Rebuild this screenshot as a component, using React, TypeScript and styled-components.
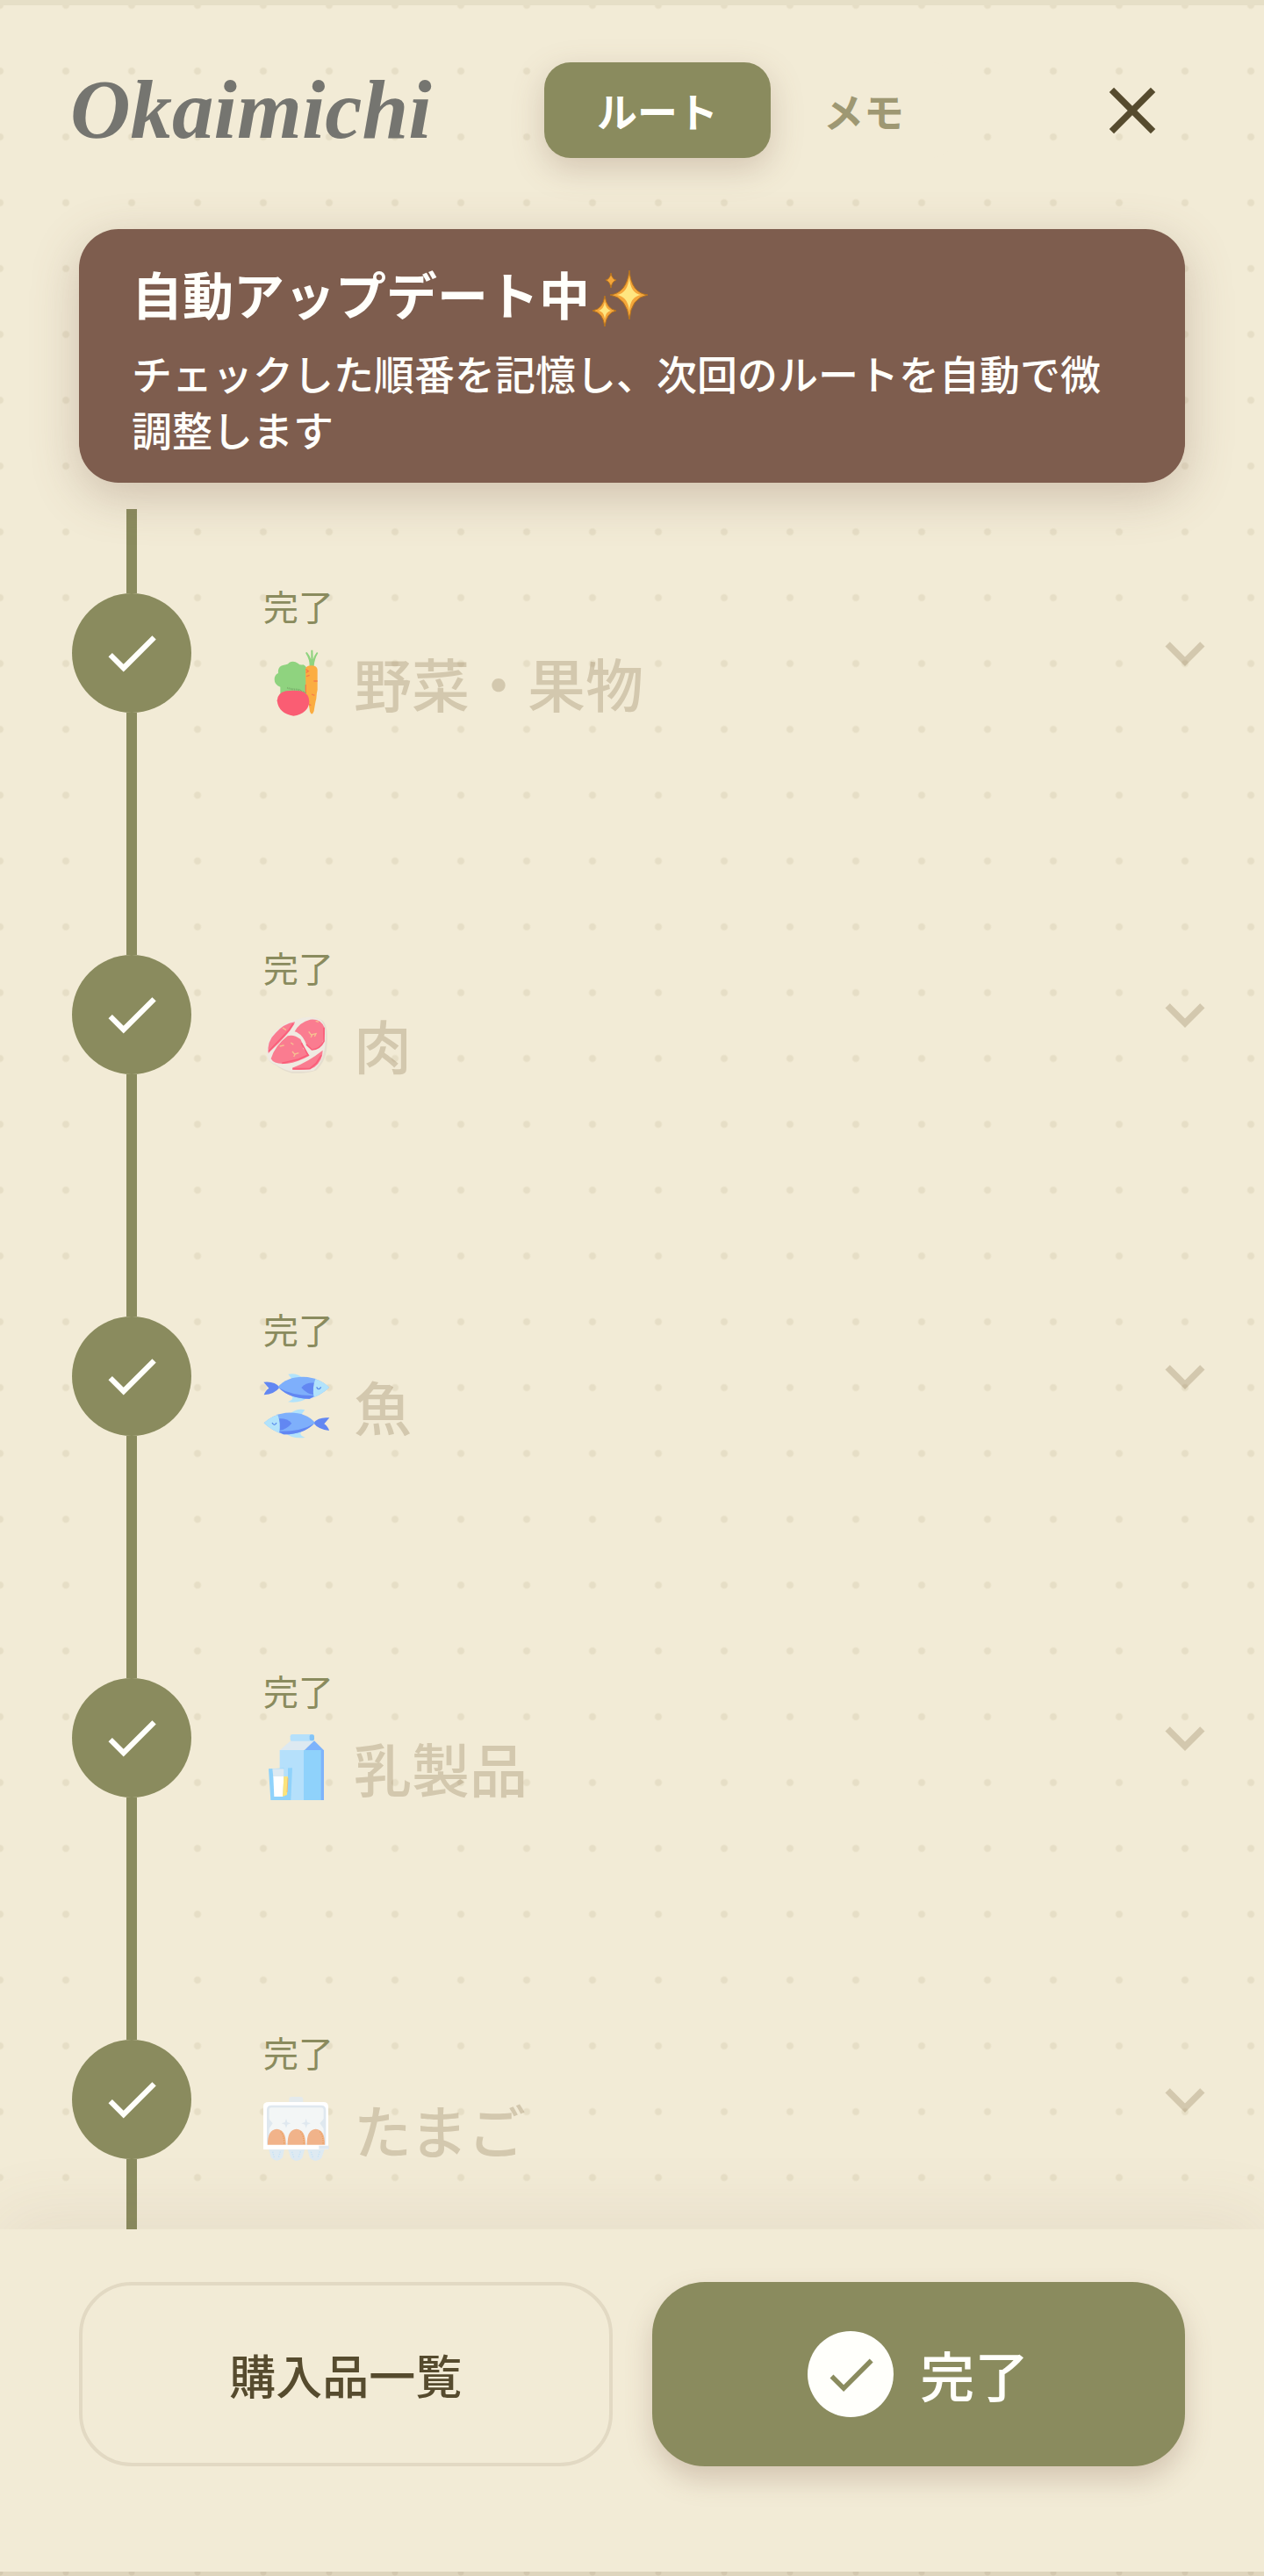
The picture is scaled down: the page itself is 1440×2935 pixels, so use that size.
import React, { useState } from "react";
import styled, { createGlobalStyle, css } from "styled-components";

const color = {
  paper: "#f2ebd6",
  dot: "#e6dec6",
  edge: "#e6dfc7",
  olive: "#8a8b5e",
  cocoa: "#7e5d4e",
  ink: "#564b2e",
  muted: "#9e9873",
  faded: "rgba(92, 62, 16, 0.2)",
  line: "#e2d9c3",
  white: "#fffffb",
};

const GlobalStyle = createGlobalStyle`
  * { box-sizing: border-box; }
  body {
    margin: 0;
    background-color: ${color.paper};
    font-family: "Noto Sans CJK JP", "Noto Sans", sans-serif;
    color: ${color.ink};
  }
  button {
    margin: 0;
    padding: 0;
    border: 0;
    background: none;
    font: inherit;
    color: inherit;
    cursor: pointer;
  }
`;

const Shell = styled.div`
  display: flex;
  flex-direction: column;
  height: 100vh;
  border-top: 6px solid ${color.edge};
  background-color: ${color.paper};
  background-image: radial-gradient(circle at 38px 38px, ${color.dot} 3px, transparent 5px);
  background-size: 75px 75px;
  background-position: -38px -38px;
`;

const Top = styled.div`
  position: relative;
  z-index: 1;
`;

const Header = styled.header`
  display: flex;
  align-items: center;
  padding: 65px 105px 81px 80px;
`;

const Logo = styled.h1`
  flex: 0 0 540px;
  margin: 0;
  font-family: "Liberation Serif", serif;
  font-style: italic;
  font-weight: 700;
  font-size: 95px;
  line-height: 109px;
  color: #757570;
`;

const Tabs = styled.nav`
  display: flex;
  border-radius: 30px;
  background: ${color.paper};
`;

const Tab = styled.button<{ $active: boolean }>`
  padding: 0 60px;
  border-radius: 30px;
  font-size: 46px;
  font-weight: 700;
  line-height: 109px;
  color: ${color.muted};
  ${({ $active }) =>
    $active &&
    css`
      background: ${color.olive};
      color: ${color.white};
      box-shadow: 0 12px 36px rgba(126, 93, 78, 0.26);
    `}
`;

const IconButton = styled.button`
  display: flex;
  margin-left: auto;
`;

const Banner = styled.section`
  margin: 0 90px 30px;
  padding: 27px 60px 30px;
  border-radius: 45px;
  background: ${color.cocoa};
  color: ${color.white};
  box-shadow: 0 15px 54px rgba(126, 93, 78, 0.3);
`;

const BannerTitle = styled.h2`
  display: flex;
  align-items: center;
  gap: 2px;
  margin: 0 0 12px;
  font-size: 58px;
  font-weight: 700;
  line-height: 92px;

  svg {
    margin-top: 12px;
  }
`;

const BannerText = styled.p`
  margin: 0;
  font-size: 46px;
  font-weight: 500;
  line-height: 64px;
`;

const Route = styled.ol`
  flex: 1;
  min-height: 0;
  margin: 0;
  padding: 0 45px 0 82px;
  overflow-y: auto;
  scrollbar-width: none;
  list-style: none;
`;

const Stop = styled.li`
  display: flex;
  gap: 82px;
  height: 412px;
`;

const Rail = styled.div`
  display: flex;
  flex-direction: column;
  align-items: center;
`;

const Track = styled.span<{ $fill?: boolean }>`
  width: 12px;
  height: 96px;
  background: ${color.olive};
  ${({ $fill }) => $fill && "flex: 1;"}
`;

const Marker = styled.button`
  display: flex;
  align-items: center;
  justify-content: center;
  width: 136px;
  height: 136px;
  border-radius: 50%;
  background: ${color.olive};
  color: ${color.white};
`;

const StopRow = styled.button`
  display: flex;
  flex: 1;
  align-items: center;
  align-self: flex-start;
  justify-content: space-between;
  padding-top: 88px;
  text-align: left;
`;

const StopInfo = styled.span`
  display: flex;
  flex-direction: column;
  gap: 23px;
`;

const Status = styled.span`
  font-size: 40px;
  line-height: 44px;
  color: ${color.olive};
`;

const StopName = styled.span`
  display: flex;
  align-items: center;
  gap: 28px;
  font-size: 66px;
  font-weight: 500;
  line-height: 84px;
  color: ${color.faded};
`;

const Chevron = styled.span`
  display: flex;
  color: ${color.faded};
`;

const Footer = styled.footer`
  position: relative;
  display: grid;
  grid-template-columns: 1fr 1fr;
  gap: 45px;
  padding: 60px 90px 120px;
  background: ${color.paper};
  box-shadow: 0 -15px 75px rgba(126, 93, 78, 0.09);
`;

const Action = styled.button<{ $primary?: boolean }>`
  display: flex;
  align-items: center;
  justify-content: center;
  gap: 30px;
  height: 210px;
  border: 4px solid ${color.line};
  border-radius: 60px;
  font-size: 53px;
  font-weight: 500;
  ${({ $primary }) =>
    $primary &&
    css`
      border: 0;
      background: ${color.olive};
      color: ${color.white};
      font-size: 62px;
      box-shadow: 0 15px 30px rgba(126, 93, 78, 0.26);
    `}
`;

const Badge = styled.span`
  display: flex;
  align-items: center;
  justify-content: center;
  width: 98px;
  height: 98px;
  border-radius: 50%;
  background: ${color.white};
  color: ${color.olive};
`;

const BottomEdge = styled.div`
  height: 5px;
  background-color: #e2d9c1;
  background-image: radial-gradient(circle at 38px 38px, #d6ccb3 3px, transparent 4px);
  background-size: 75px 75px;
  background-position: -38px -37px;
`;

const CheckIcon = ({ size }: { size: number }) => (
  <svg width={size} height={size} viewBox="0 0 24 24" fill="currentColor" aria-hidden="true">
    <path d="M9 16.17 4.83 12l-1.42 1.41L9 19 21 7l-1.41-1.41z" />
  </svg>
);

const CloseIcon = () => (
  <svg width="90" height="90" viewBox="0 0 24 24" fill="currentColor" aria-hidden="true">
    <path d="M19 6.41 17.59 5 12 10.59 6.41 5 5 6.41 10.59 12 5 17.59 6.41 19 12 13.41 17.59 19 19 17.59 13.41 12z" />
  </svg>
);

const ChevronIcon = () => (
  <svg width="90" height="90" viewBox="0 0 24 24" fill="currentColor" aria-hidden="true">
    <path d="M16.59 8.59 12 13.17 7.41 8.59 6 10l6 6 6-6z" />
  </svg>
);

const SparklesIcon = () => (
  <svg width="66" height="66" viewBox="0 0 66 66" role="img" aria-label="キラキラ">
    <g fill="#f4a63a" stroke="#b9741c" strokeWidth="1">
      <path d="M43 1Q45 27 64 29Q45 32 43 57Q40 32 21 29Q40 27 43 1Z" />
      <path d="M15 30Q17 45 28 47Q17 49 15 65Q13 49 1 47Q13 45 15 30Z" />
      <path d="M22 4Q23 11 28 12Q23 14 22 21Q21 14 16 12Q21 11 22 4Z" />
    </g>
    <g fill="#ffe680">
      <path d="M43 9Q44 27 56 29Q44 31 43 47Q41 31 29 29Q41 27 43 9Z" />
      <path d="M15 37Q16 45 22 47Q16 48 15 56Q14 48 8 47Q14 45 15 37Z" />
    </g>
  </svg>
);

const VegetableIcon = () => (
  <svg width="75" height="75" viewBox="60 27 225 225" overflow="visible" aria-hidden="true">
    <path d="M118 182V155Q98 148 98 130Q98 113 111 108Q108 84 130 80Q145 78 148 72Q163 63 178 74Q186 82 196 79Q210 84 208 100V180Z" fill="#8fd37f" />
    <path d="M218 84Q219 62 204 38L209 36Q219 48 223 61L223 29H229L230 61Q234 47 243 36L247 39Q234 61 233 84Z" fill="#8fd37f" />
    <path d="M204 94Q206 82 224 82Q244 82 245 96V165Q242 175 241 195Q237 210 233 238Q226 256 219 239Q216 216 212 205Q206 190 205 160Z" fill="#fbad42" />
    <path d="M205 95L214 101L206 106M207 119L218 115M205 147V174M232 135H245M225 180L235 184M216 214L223 218" fill="none" stroke="#f77c4a" strokeWidth="4" />
    <path d="M142 158Q155 164 181 164L205 177" fill="none" stroke="#6f9e60" strokeWidth="6" strokeDasharray="2 3" />
    <path d="M107 202Q108 176 137 169Q162 165 188 169Q217 177 217 206Q213 246 163 254Q112 246 107 202Z" fill="#fa5d73" />
  </svg>
);

const MeatIcon = () => (
  <svg width="75" height="75" viewBox="60 34 225 225" overflow="visible" aria-hidden="true">
    <path d="M75 190Q70 145 98 110Q132 74 175 66Q220 45 260 65Q282 82 278 142Q278 203 240 237Q210 248 158 246Q120 236 104 219Q80 214 75 190Z" fill="#e5decf" />
    <path d="M73 188Q66 144 95 108Q129 71 174 63Q216 46 255 63Q276 80 272 140Q269 204 232 237Q203 242 155 240Q118 229 102 216Q78 211 73 188Z" fill="#efeae1" />
    <path d="M77 179Q72 137 101 110Q129 77 168 71L165 80Q142 119 83 172Z" fill="#fa7c90" />
    <path d="M167 104Q184 72 220 63Q257 59 269 91Q274 134 249 160Q225 171 208 151Q198 119 174 106Z" fill="#fa7c90" />
    <path d="M86 197Q99 153 143 119Q163 112 187 130Q196 145 196 162L218 186Q176 209 143 213Q97 218 86 197Z" fill="#fa7c90" />
    <path d="M159 228Q213 208 263 168Q263 203 235 225Q214 238 159 234Z" fill="#fa7c90" />
    <g fill="none" stroke="#fa5d79" strokeWidth="5">
      <path d="M78 172L147 100L162 77M267 90V137Q253 165 226 166L207 148M190 143L213 184L180 199L124 212M161 231L219 231L241 212L258 185" />
    </g>
    <path d="M126 91L138 99M116 154L131 151M154 142L163 149M159 172L168 183L164 190M168 181L181 177M215 104L226 118L222 124M224 115L240 111L235 121M239 68L249 71" fill="none" stroke="#f6c091" strokeWidth="4" />
  </svg>
);

const FishBody = () => (
  <>
    <path d="M145 77Q173 71 197 91L157 93Z" fill="#b2e3fb" />
    <path d="M144 172Q166 164 158 151L210 157Q190 177 144 172Z" fill="#b2e3fb" />
    <path d="M61 104Q99 100 116 122Q98 145 62 148Q66 134 79 125Z" fill="#6287f2" />
    <path d="M110 121Q143 82 211 87Q256 94 285 122Q257 149 218 161Q150 162 110 121Z" fill="#7eaffb" />
    <path d="M113 124Q158 152 236 150L218 161Q151 162 113 124Z" fill="#6287f2" />
    <path d="M190 123Q206 104 237 107L231 147Q208 144 190 123Z" fill="#6287f2" />
    <path d="M238 94Q266 103 285 122Q264 143 233 156Q226 123 238 94Z" fill="#b2e3fb" />
    <path d="M242 121Q249 135 257 121" fill="none" stroke="#5b8eec" strokeWidth="4" />
  </>
);

const FishIcon = () => (
  <svg width="75" height="75" viewBox="60 72 225 225" overflow="visible" aria-hidden="true">
    <FishBody />
    <g transform="translate(347 122) scale(-1 1)">
      <FishBody />
    </g>
  </svg>
);

const MilkIcon = () => (
  <svg width="75" height="75" viewBox="60 50 225 225" overflow="visible" aria-hidden="true">
    <rect x="152" y="50" width="80" height="25" rx="7" fill="#b5e0fb" />
    <rect x="218" y="51" width="16" height="21" rx="6" fill="#83c4f7" />
    <path d="M152 73H234L200 105H116Z" fill="#dde9f1" />
    <path d="M234 72L267 105H200Z" fill="#7eb3fb" />
    <path d="M116 104H199V275H116Z" fill="#b5e0fb" />
    <path d="M198 104H267V275H198Z" fill="#8fd2fb" />
    <path d="M257 104H267V275H257Z" fill="#7eb3fb" />
    <path d="M78 168L159 165L154 275H85Z" fill="#8fd2fb" />
    <path d="M91 168H131V196H94Z" fill="#dde9f1" />
    <path d="M131 164H144V196H131Z" fill="#b5e0fb" />
    <path d="M94 194H130L127 263H97Z" fill="#fff" />
    <path d="M130 194H144L141 257L126 263Z" fill="#fce47c" />
    <path d="M144 199L141 248" stroke="#f3bd75" strokeWidth="3" />
  </svg>
);

const EggIcon = () => (
  <svg width="75" height="75" viewBox="60 57 225 225" overflow="visible" aria-hidden="true">
    <rect x="148" y="60" width="48" height="24" rx="9" fill="#e4eaec" />
    <path d="M78 238H132L126 268Q106 288 86 268ZM144 238H202L193 269Q174 290 153 268ZM210 238H270L259 269Q239 289 219 269Z" fill="#deeaf2" />
    <path d="M60 240V92Q60 78 78 78H265Q282 78 282 94V238Z" fill="#fff" />
    <path d="M76 222V104Q76 93 88 93H257Q270 93 270 106V222Z" fill="#f3f6f6" stroke="#dfe8ef" strokeWidth="8" />
    <path d="M138 134L142 147L154 151L142 155L138 167L134 155L122 151L134 147ZM206 134L210 147L222 151L210 155L206 167L202 155L190 151L202 147ZM74 130L92 151L76 174ZM271 130L253 151L270 174Z" fill="#dfe8ef" />
    <path d="M75 225Q73 173 106 170Q139 173 137 225ZM143 225Q141 173 173 170Q206 173 204 225ZM209 225Q207 173 239 170Q272 173 270 225Z" fill="#f1b38a" />
    <path d="M119 179Q132 193 131 223M187 179Q200 193 198 223M253 179Q266 193 264 223" fill="none" stroke="#e8a05b" strokeWidth="4" strokeDasharray="4 4" />
    <path d="M60 224H282V240H60Z" fill="#fff" />
    <path d="M250 227H284V239H250Z" fill="#dfe8ef" />
    <path d="M92 248L97 267M118 247L112 267M158 248L164 267M187 247L180 268M223 248L229 267M253 247L246 268" stroke="#c4e1f5" strokeWidth="4" strokeDasharray="4 4" />
  </svg>
);

const stops = [
  { name: "野菜・果物", Icon: VegetableIcon },
  { name: "肉", Icon: MeatIcon },
  { name: "魚", Icon: FishIcon },
  { name: "乳製品", Icon: MilkIcon },
  { name: "たまご", Icon: EggIcon },
];

const tabs = ["ルート", "メモ"];

export default function App() {
  const [tab, setTab] = useState(tabs[0]);

  return (
    <>
      <GlobalStyle />
      <Shell>
        <Top>
          <Header>
            <Logo>Okaimichi</Logo>
            <Tabs>
              {tabs.map((name) => (
                <Tab key={name} type="button" $active={name === tab} onClick={() => setTab(name)}>
                  {name}
                </Tab>
              ))}
            </Tabs>
            <IconButton type="button" aria-label="閉じる">
              <CloseIcon />
            </IconButton>
          </Header>
          <Banner>
            <BannerTitle>
              自動アップデート中
              <SparklesIcon />
            </BannerTitle>
            <BannerText>チェックした順番を記憶し、次回のルートを自動で微調整します</BannerText>
          </Banner>
        </Top>
        <Route>
          {stops.map(({ name, Icon }) => (
            <Stop key={name}>
              <Rail>
                <Track />
                <Marker type="button" aria-label={name}>
                  <CheckIcon size={74} />
                </Marker>
                <Track $fill />
              </Rail>
              <StopRow type="button">
                <StopInfo>
                  <Status>完了</Status>
                  <StopName>
                    <Icon />
                    {name}
                  </StopName>
                </StopInfo>
                <Chevron>
                  <ChevronIcon />
                </Chevron>
              </StopRow>
            </Stop>
          ))}
        </Route>
        <Footer>
          <Action type="button">購入品一覧</Action>
          <Action type="button" $primary>
            <Badge>
              <CheckIcon size={67} />
            </Badge>
            完了
          </Action>
        </Footer>
        <BottomEdge />
      </Shell>
    </>
  );
}
